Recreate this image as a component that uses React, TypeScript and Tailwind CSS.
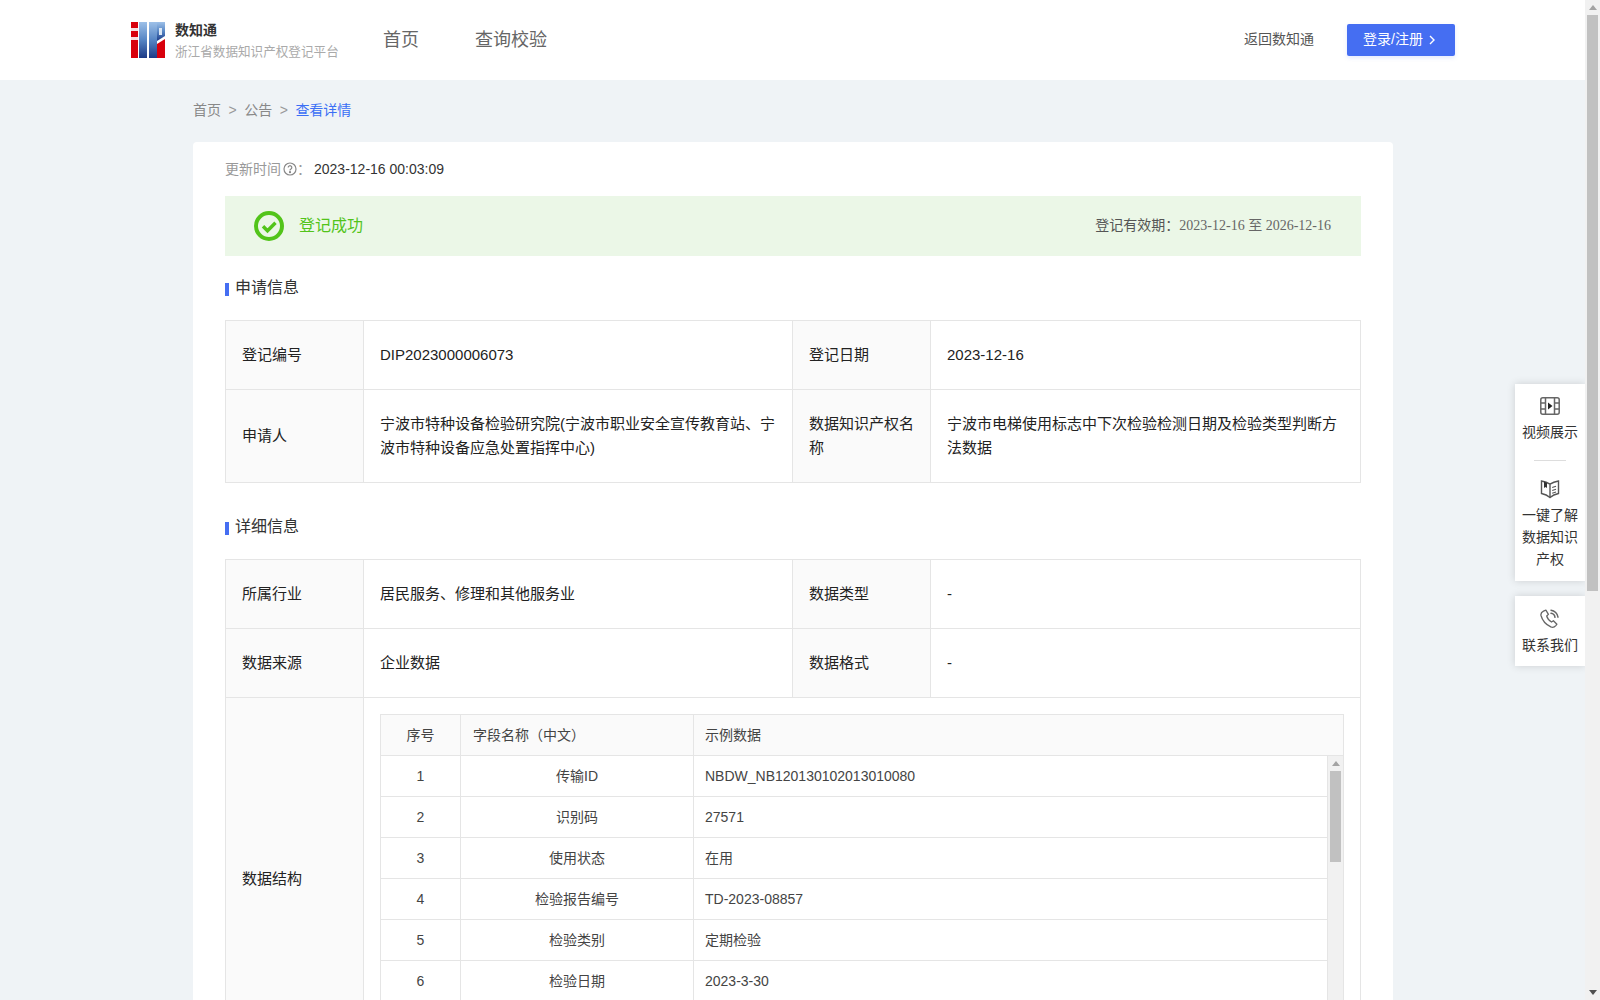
import React from "react";

const font = { fontFamily: '"Liberation Sans","Noto Sans CJK SC",sans-serif' };

function Logo() {
  return (
    <svg width="34" height="36" viewBox="0 0 34 36" className="shrink-0">
      <defs>
        <linearGradient id="lg" x1="0" y1="0" x2="0" y2="1">
          <stop offset="0" stopColor="#9dc0e8" />
          <stop offset="0.5" stopColor="#5685c4" />
          <stop offset="1" stopColor="#1c3a86" />
        </linearGradient>
      </defs>
      <rect x="0" y="0" width="7" height="6" fill="#d8000c" />
      <rect x="0" y="6" width="7" height="3" fill="#f7dfe0" />
      <rect x="0" y="9" width="7" height="6" fill="#d8000c" />
      <rect x="0" y="15" width="7" height="3" fill="#f7dfe0" />
      <rect x="0" y="18" width="7" height="18" fill="#d8000c" />
      <rect x="8" y="0" width="8" height="36" fill="url(#lg)" />
      <rect x="18" y="0" width="8" height="36" fill="url(#lg)" />
      <path d="M26 0h8v14l-8 5z" fill="url(#lg)" />
      <rect x="28" y="6" width="3" height="7" fill="#dbe7f5" />
      <path d="M26 22l8-5v19h-8z" fill="#d8000c" />
    </svg>
  );
}

function Bar({ children }: { children: React.ReactNode }) {
  return (
    <div className="flex items-center h-6 text-[16px] text-[#333]">
      <span className="w-1 h-[13px] bg-[#456ef2] mr-[6px] mt-[2px]" />
      {children}
    </div>
  );
}

const th = "border border-[#e5e5e5] bg-[#fafafa] px-4 text-left font-normal align-middle leading-6";
const td = "border border-[#e5e5e5] px-4 align-middle leading-6";

function Cols() {
  return (
    <colgroup>
      <col className="w-[138px]" />
      <col className="w-[429px]" />
      <col className="w-[138px]" />
      <col />
    </colgroup>
  );
}

const rows = [
  ["1", "传输ID", "NBDW_NB120130102013010080"],
  ["2", "识别码", "27571"],
  ["3", "使用状态", "在用"],
  ["4", "检验报告编号", "TD-2023-08857"],
  ["5", "检验类别", "定期检验"],
  ["6", "检验日期", "2023-3-30"],
];

function InnerTable() {
  return (
    <div className="border border-[#e5e5e5] text-[14px] text-[#444] border-b-0">
      <div className="grid grid-cols-[79px_233px_1fr] h-[41px] bg-[#fafafa] border-b border-[#e5e5e5] items-stretch">
        <div className="flex items-center justify-center">序号</div>
        <div className="flex items-center px-3 border-l border-[#e5e5e5]">字段名称（中文）</div>
        <div className="flex items-center pl-[11px] border-l border-[#e5e5e5]">示例数据</div>
      </div>
      <div className="flex h-[287px] overflow-hidden">
        <div className="flex-1 border-r border-[#e5e5e5]">
          {rows.map((r) => (
            <div key={r[0]} className="grid grid-cols-[79px_233px_1fr] h-[41px] border-b border-[#e5e5e5]">
              <div className="flex items-center justify-center">{r[0]}</div>
              <div className="flex items-center justify-center border-l border-[#e5e5e5]">{r[1]}</div>
              <div className="flex items-center pl-[11px] border-l border-[#e5e5e5]">{r[2]}</div>
            </div>
          ))}
        </div>
        <div className="w-[15px] bg-[#f1f1f1] flex flex-col items-center">
          <div className="h-[15px] flex items-center justify-center">
            <div className="w-0 h-0 border-x-4 border-x-transparent border-b-[5px] border-b-[#a3a3a3]" />
          </div>
          <div className="w-[11px] h-[91px] bg-[#c1c1c1]" />
        </div>
      </div>
    </div>
  );
}

function FilmIcon() {
  return (
    <svg width="20" height="18" viewBox="0 0 20 18" fill="none" stroke="#666" strokeWidth="1.5">
      <rect x="0.8" y="0.8" width="18.4" height="16.4" rx="2" />
      <path d="M5.5 1v16M14.500 1v16M1 6h4.500M1 12h4.500M14.500 6H19M14.500 12H19" />
      <path d="M8 5.500l4.500 3.500-4.500 3.500z" fill="#222" stroke="none" />
    </svg>
  );
}

function BookIcon() {
  return (
    <svg width="20" height="20" viewBox="0 0 20 20" fill="none" stroke="#555" strokeWidth="1.400">
      <path d="M1.500 2c3 .5 6 1.500 8.500 3.200 2.500-1.700 5.500-2.700 8.500-3.200v12.500c-3 .6-6 1.800-8.500 4-2.500-2.200-5.500-3.400-8.500-4z" />
      <path d="M10 5.500v13" />
      <path d="M12.200 8.500l3.800-1.300M12.200 11.500l3.800-1.300M12.200 14.300l3.800-1.300" strokeWidth="1.100" />
      <path d="M4 2.500v6.500l1.500-1 1.500 1V4z" fill="#333" stroke="none" />
    </svg>
  );
}

function PhoneIcon() {
  return (
    <svg width="20" height="20" viewBox="0 0 20 20" fill="none" stroke="#666" strokeWidth="1.300" strokeLinejoin="round">
      <path d="M3.500 2.200l2.400-1 2.500 4.200-1.700 1.600c.6 2.400 2.500 4.600 4.800 6l1.900-1.300 3.500 3.500-1.100 1.400c-1.300 1.500-3.100 2.100-5 1.300C6 15.600 2.200 11 1 6.500.6 4.700 1.900 3 3.500 2.200z" />
      <path d="M11 1.200c3.600.4 6.600 3.400 7 7M11 4.300c2.100.3 3.700 1.900 4 4" strokeLinecap="round" strokeWidth="1.500" />
    </svg>
  );
}

function SideItem({ icon, lines }: { icon: React.ReactNode; lines: string[] }) {
  return (
    <div className="flex flex-col items-center">
      <div className="h-5 flex items-center justify-center">{icon}</div>
      <div className="mt-[5px] text-[14px] leading-[22px] text-[#333] text-center">
        {lines.map((l) => (
          <div key={l}>{l}</div>
        ))}
      </div>
    </div>
  );
}

export default function App() {
  return (
    <div style={font} className="h-screen flex overflow-hidden bg-[#eff3f6]">
      <div className="relative flex-1 min-w-0 overflow-hidden">
        <header className="h-20 bg-white flex items-center justify-between pl-[131px] pr-[130px]">
          <div className="flex items-center">
            <Logo />
            <div className="ml-[10px] w-[164px] pt-[2px]">
              <div className="text-[14px] leading-[18px] font-bold text-[#333]">数知通</div>
              <div className="text-[12.600px] leading-[18px] mt-[4px] text-[#aaa] whitespace-nowrap">浙江省数据知识产权登记平台</div>
            </div>
            <nav className="flex items-center ml-11 gap-14 text-[18px] text-[#666]">
              <span>首页</span>
              <span>查询校验</span>
            </nav>
          </div>
          <div className="flex items-center gap-[33px]">
            <span className="text-[14px] text-[#555] pb-[1px]">返回数知通</span>
            <button className="w-[108px] h-8 bg-[#456ef2] rounded-[2px] text-white text-[14px] flex items-center justify-center gap-[6px] pb-[1px] pr-[4px] shadow-[0_2px_4px_rgba(69,110,242,0.15)]">
              登录/注册
              <svg width="6" height="10" viewBox="0 0 6 10" fill="none" stroke="#fff" strokeWidth="1.400">
                <path d="M1 1l4 4-4 4" />
              </svg>
            </button>
          </div>
        </header>

        <div className="w-[1200px] ml-[193px]">
          <div className="h-[62px] flex items-center text-[14px] text-[#888] pb-[1px]">
            <span>首页</span>
            <span className="mx-[7.500px] text-[#999]">&gt;</span>
            <span>公告</span>
            <span className="mx-[7.500px] text-[#999]">&gt;</span>
            <span className="text-[#3b6ff5]">查看详情</span>
          </div>

          <main className="bg-white rounded-t-[4px] px-8 pt-4">
            <div className="flex items-center h-[22px] text-[14px]">
              <span className="text-[#999]">更新时间</span>
              <svg width="14" height="14" viewBox="0 0 14 14" fill="none" stroke="#888" strokeWidth="1.200" className="ml-[2px]">
                <circle cx="7" cy="7" r="6" />
                <path d="M5.200 5.500a1.800 1.800 0 1 1 2.700 1.600c-.6.3-.9.6-.9 1.300" />
                <circle cx="7" cy="10.200" r="0.500" fill="#888" />
              </svg>
              <span className="text-[#999] w-[17px]">：</span>
              <span className="text-[#333]">2023-12-16 00:03:09</span>
            </div>

            <div className="mt-4 h-[60px] bg-[#ebf7e7] flex items-center justify-between pl-[29px] pr-[30px]">
              <div className="flex items-center">
                <svg width="30" height="30" viewBox="0 0 30 30" fill="none" stroke="#52c41a">
                  <circle cx="15" cy="15" r="13" strokeWidth="4" />
                  <path d="M9 15.300l4.500 4.500 8-8" strokeWidth="3.400" />
                </svg>
                <span className="ml-[15px] text-[16px] text-[#52c41a] pb-[1px]">登记成功</span>
              </div>
              <div className="text-[14px] text-[#555] pb-[2px]">
                登记有效期：
                <span style={{ fontFamily: '"Liberation Serif","Noto Sans CJK SC",serif' }} className="text-[#666]">
                  2023-12-16 至 2026-12-16
                </span>
              </div>
            </div>

            <div className="mt-[20px]">
              <Bar>申请信息</Bar>
            </div>

            <table className="mt-[20px] w-full table-fixed border-collapse text-[15px] text-[#222]">
              <Cols />
              <tbody>
                <tr className="h-[69px]">
                  <th className={th}>登记编号</th>
                  <td className={td}>DIP2023000006073</td>
                  <th className={th}>登记日期</th>
                  <td className={td}>2023-12-16</td>
                </tr>
                <tr className="h-[93px]">
                  <th className={th}>申请人</th>
                  <td className={td}>宁波市特种设备检验研究院(宁波市职业安全宣传教育站、宁波市特种设备应急处置指挥中心)</td>
                  <th className={th}>数据知识产权名称</th>
                  <td className={td}>宁波市电梯使用标志中下次检验检测日期及检验类型判断方法数据</td>
                </tr>
              </tbody>
            </table>

            <div className="mt-[32px]">
              <Bar>详细信息</Bar>
            </div>

            <table className="mt-[20px] w-full table-fixed border-collapse text-[15px] text-[#222]">
              <Cols />
              <tbody>
                <tr className="h-[69px]">
                  <th className={th}>所属行业</th>
                  <td className={td}>居民服务、修理和其他服务业</td>
                  <th className={th}>数据类型</th>
                  <td className={td}>-</td>
                </tr>
                <tr className="h-[69px]">
                  <th className={th}>数据来源</th>
                  <td className={td}>企业数据</td>
                  <th className={th}>数据格式</th>
                  <td className={td}>-</td>
                </tr>
                <tr>
                  <th className={th}>数据结构</th>
                  <td colSpan={3} className="border border-[#e5e5e5] p-4">
                    <InnerTable />
                  </td>
                </tr>
              </tbody>
            </table>
          </main>
        </div>

        <aside className="absolute right-0 top-[384px] w-[70px] flex flex-col gap-[15px]">
          <div className="bg-white shadow-[0_0_8px_rgba(0,0,0,0.15)] pt-3 pb-[11px] flex flex-col items-center">
            <SideItem icon={<FilmIcon />} lines={["视频展示"]} />
            <div className="w-8 h-px bg-[#ddd] mt-[17px] mb-[18px]" />
            <SideItem icon={<BookIcon />} lines={["一键了解", "数据知识", "产权"]} />
          </div>
          <div className="bg-white shadow-[0_0_8px_rgba(0,0,0,0.15)] pt-[13px] pb-[10px] flex flex-col items-center">
            <SideItem icon={<PhoneIcon />} lines={["联系我们"]} />
          </div>
        </aside>
      </div>

      <div className="w-[15px] h-full bg-[#f1f1f1] flex flex-col items-center shrink-0">
        <div className="h-[15px] flex items-center justify-center">
          <div className="w-0 h-0 border-x-4 border-x-transparent border-b-[5px] border-b-[#a3a3a3]" />
        </div>
        <div className="w-[11px] h-[576px] bg-[#c1c1c1]" />
        <div className="flex-1" />
        <div className="h-[15px] flex items-center justify-center">
          <div className="w-0 h-0 border-x-4 border-x-transparent border-t-[5px] border-t-[#505050]" />
        </div>
      </div>
    </div>
  );
}
